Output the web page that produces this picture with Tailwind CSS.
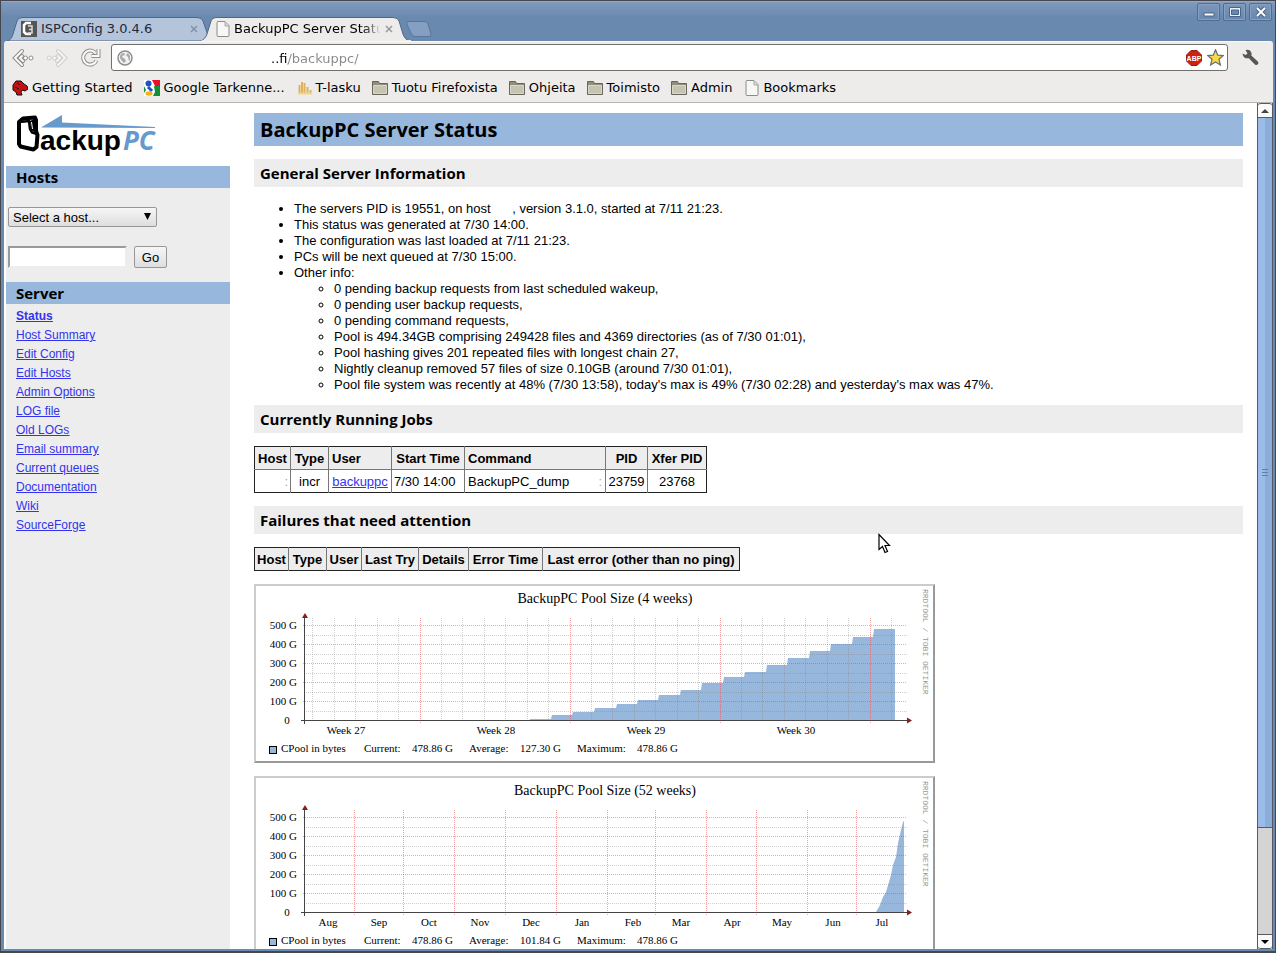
<!DOCTYPE html>
<html lang="en">
<head>
    <meta charset="utf-8"/>
    <meta content="width=device-width, initial-scale=1.0" name="viewport"/>
    <title>BackupPC Server Status</title>
    <script src="https://cdn.jsdelivr.net/npm/@tailwindcss/browser@4"></script>
</head>
<body class="h-screen overflow-hidden bg-[#6a89af] font-['Liberation_Sans',Arial,sans-serif] text-[13px] leading-4 text-black">
<div class="relative flex h-screen flex-col border border-[#45474d] border-b-2 bg-[#6a89af] pr-[2px] pb-[2px] pl-[3px]">

    <!-- Title bar and tabs -->
    <header class="-mr-[2px] -ml-[3px] flex h-10 shrink-0 items-end justify-between border-t border-[#8fa9cb] bg-linear-to-b from-[#8099bd] via-[#6a89af] via-40% to-[#6a89af] pl-[6px] font-['DejaVu_Sans',sans-serif]">
        <nav class="flex items-end">
            <div class="relative flex h-6 w-[195px] items-center pl-[14px] text-[#1c2a3c]">
                <svg class="absolute inset-0" width="204" height="24" viewBox="0 0 204 24"><path d="M0 24C4 23 5 20 6 17L10 4Q11 .5 15 .5H190Q195 .5 196 4L203 24Z" fill="#b4c4da" stroke="#4d6689"/></svg>
                <svg class="relative mr-1 shrink-0" width="16" height="16" viewBox="0 0 16 16"><path fill="#555" d="M0 0h16v16H0z"/><path d="M10 2H5L3 4v7l2 2h5" fill="none" stroke="#fff" stroke-width="2.5"/><path d="M7 5h4v7H7M8 8.500h3" fill="none" stroke="#ddd" stroke-width="1.500"/></svg>
                <a href="#" class="relative flex-1">ISPConfig 3.0.4.6</a>
                <button class="relative mr-1 size-2" aria-label="Close tab"><svg width="8" height="8" viewBox="0 0 8 8"><path d="M1 1l6 6M7 1L1 7" stroke="#8391a5" stroke-width="1.500"/></svg></button>
            </div>
            <div class="relative flex h-6 w-[204px] items-center pl-[14px]">
                <svg class="absolute inset-0" width="210" height="24" viewBox="0 0 210 24"><path d="M-2 24C2 23 4 20 5 17L9 4Q10 .5 14 .5H191Q196 .5 197 4L201 17Q203 23 208 24Z" fill="#edeceb" stroke="#4d6689"/><path d="M-3 24H209" stroke="#edeceb" stroke-width="2"/></svg>
                <svg class="relative mr-1 shrink-0" width="14" height="16" viewBox="0 0 14 16"><path d="M2 .5h7L13 4.500v10q0 1-1 1H2q-1 0-1-1v-13q0-1 1-1z" fill="#f7f8f6" stroke="#8a8c88"/><path d="M9 1v4h4" fill="#d5d9d5" stroke="#aaa"/></svg>
                <a href="#" class="relative w-[147px] overflow-hidden whitespace-nowrap [mask-image:linear-gradient(to_right,#000_88%,transparent)]">BackupPC Server Status</a>
                <button class="relative ml-1 size-2" aria-label="Close tab"><svg width="8" height="8" viewBox="0 0 8 8"><path d="M1 1l6 6M7 1L1 7" stroke="#999" stroke-width="1.500"/></svg></button>
            </div>
            <button class="mb-[3px]" aria-label="New tab"><svg width="26" height="17" viewBox="0 0 26 17"><path d="M3 .5H19Q21 .5 22 3L25 13Q25.500 15.500 23 15.500H9Q6.500 15.500 5.500 13L.8 3Q0 .5 3 .5Z" fill="#859fc2" stroke="#5a759b"/></svg></button>
        </nav>
        <div class="flex gap-[3px] self-start pt-px pr-[3px]">
            <button class="flex h-[18px] w-[23px] items-center justify-center rounded-[2px] border border-[#4f6d93] shadow-[inset_0_0_0_1px_#86a0c2]" aria-label="Minimize"><svg width="12" height="10" viewBox="0 0 12 10"><path d="M1 6h10v3H1z" fill="#fff" stroke="#4a6486"/></svg></button>
            <button class="flex h-[18px] w-[23px] items-center justify-center rounded-[2px] border border-[#4f6d93] shadow-[inset_0_0_0_1px_#86a0c2]" aria-label="Maximize"><svg width="12" height="10" viewBox="0 0 12 10"><path d="M.5.5h11v9H.5z" fill="#e8eef6" stroke="#4a6486"/><path d="M2.500 3h7v4.500h-7z" fill="#6a89af" stroke="#4a6486"/></svg></button>
            <button class="flex h-[18px] w-[23px] items-center justify-center rounded-[2px] border border-[#4f6d93] shadow-[inset_0_0_0_1px_#86a0c2]" aria-label="Close"><svg width="12" height="12" viewBox="0 0 12 12"><path d="M2 2l8 8M10 2l-8 8" stroke="#4a6486" stroke-width="4"/><path d="M2 2l8 8M10 2l-8 8" stroke="#fff" stroke-width="2"/></svg></button>
        </div>
    </header>

    <!-- Toolbar -->
    <div class="flex h-8 shrink-0 items-center rounded-t-[3px] border-t border-[#f8f8f8] bg-[#edeceb] pr-[14px] pl-2 font-['DejaVu_Sans',sans-serif]">
        <button class="mr-3" aria-label="Back"><svg width="22" height="20" viewBox="0 0 22 20"><path d="M10 3L3 10l7 7M10 8L8 10l3 3" fill="none" stroke="#8c8c8a" stroke-width="4" stroke-linecap="round"/><path d="M10 3L3 10l7 7M10 8L8 10l3 3" fill="none" stroke="#fafafa" stroke-width="2" stroke-linecap="round"/><circle cx="13.500" cy="10" r="2" fill="#fff" stroke="#8c8c8a"/><circle cx="19" cy="10" r="2" fill="#fff" stroke="#8c8c8a"/></svg></button>
        <button class="mr-3" aria-label="Forward"><svg width="22" height="20" viewBox="0 0 22 20"><path d="M12 3l7 7-7 7M12 8l2 2-3 3" fill="none" stroke="#cfcecc" stroke-width="4" stroke-linecap="round"/><path d="M12 3l7 7-7 7M12 8l2 2-3 3" fill="none" stroke="#f4f4f3" stroke-width="2" stroke-linecap="round"/><circle cx="8.500" cy="10" r="2" fill="#f4f4f3" stroke="#cfcecc"/><circle cx="3" cy="10" r="2" fill="#f4f4f3" stroke="#cfcecc"/></svg></button>
        <button class="mr-[10px]" aria-label="Reload"><svg width="21" height="21" viewBox="0 0 21 21"><path d="M16.500 13.500A7 7 0 1 1 15 5.500M18.500 2v7h-7" fill="none" stroke="#8c8c8a" stroke-width="4"/><path d="M16.500 13.500A7 7 0 1 1 15 5.500M18.500 2v7h-7" fill="none" stroke="#fafafa" stroke-width="2"/></svg></button>
        <div class="flex h-[27px] flex-1 items-center rounded-[3px] border border-[#70706c] bg-white pr-[3px] pl-[5px]">
            <svg width="16" height="16" viewBox="0 0 16 16"><circle cx="8" cy="8" r="7" fill="#f2f2f2" stroke="#8d8d8d" stroke-width="1.500"/><path d="M3 6Q4 3 7 3L8 4 7 6 6 5 5 7 8 9 9 11 7 13 5 11 3 8zM11 3l2 3 0 4-1 1-1-4-2-2z" fill="#aaa"/></svg>
            <label for="address" class="sr-only">Address</label>
            <input id="address" class="min-w-0 flex-1 bg-linear-to-r from-black from-[155px] to-[#888] to-[155px] bg-clip-text pt-[2px] pl-[138px] leading-5 text-transparent outline-none" value="..fi/backuppc/"/>
            <svg class="mr-[5px]" width="16" height="16" viewBox="0 0 16 16"><path d="M5 .5h6L15.500 5v6L11 15.500H5L.5 11V5z" fill="#d0200f" stroke="#8d2018"/><text x="8" y="11" text-anchor="middle" font-family="Liberation Sans" font-weight="700" font-size="7" fill="#fff">ABP</text></svg>
            <svg width="17" height="17" viewBox="0 0 16 16"><path d="M8 .8l2.100 5 5.200.4-4 3.500 1.300 5.300L8 12.200 3.400 15l1.300-5.300-4-3.500 5.200-.4z" fill="#f9d94a" stroke="#66707c" stroke-width="1.200"/></svg>
        </div>
        <button class="ml-[14px]" aria-label="Settings"><svg width="17" height="17" viewBox="0 0 17 17"><path d="M3.500 1Q8-.5 9.500 4q.3 1.500-.2 2.500l6.500 6q1.200 1.500 0 2.800t-2.900.2L6.800 9.200Q2.500 10 1 6.500L.5 4.500 3.500 6l2-1.500z" fill="#565656"/></svg></button>
    </div>

    <!-- Bookmarks bar -->
    <nav class="flex h-[30px] shrink-0 items-center gap-[11px] border-b border-[#b5b4b2] bg-[#edeceb] pl-2 font-['DejaVu_Sans',sans-serif]">
        <a href="#" class="flex items-center gap-1"><svg width="16" height="16" viewBox="0 0 16 16"><path d="M1 5L4 1l5 0 3 3 3 2 1 3-3 2-3-1-1 2 1 3H5l-1-3-3-2z" fill="#c80f12" stroke="#111"/><path d="M5 3l3 2M3 7l4 2" stroke="#111"/></svg>Getting Started</a>
        <a href="#" class="flex items-center gap-1"><svg width="16" height="16" viewBox="0 0 16 16"><path fill="#fff" d="M0 0h16v16H0z"/><path d="M8 0h8v6h-5z" fill="#e8112a"/><path d="M10 6h6v10H9l2-4z" fill="#128f38"/><path d="M0 6l2 4-2 3z" fill="#128f38"/><circle cx="4.500" cy="3.500" r="3" fill="#1c53c6"/><path d="M4 7l4 4" stroke="#1c53c6" stroke-width="3"/><ellipse cx="5" cy="13.500" rx="3.500" ry="2.200" fill="#f3b21b"/></svg>Google Tarkenne...</a>
        <a href="#" class="ml-[2px] flex items-center gap-1"><svg width="14" height="16" viewBox="0 0 14 16"><path d="M1.500 14V5M4 14V2M6.500 14V3M9.500 14V7M12.500 14v-4" stroke="#deb35c" stroke-width="2"/><path d="M0 13.500h14" stroke="#f1d490" stroke-width="2"/></svg>T-lasku</a>
        <a href="#" class="flex items-center gap-1"><svg width="16" height="16" viewBox="0 0 16 16"><path d="M.5 1.500h6l1 2h8v11H.5z" fill="#8f8f7b" stroke="#66665a"/><path d="M1.500 5.500h13v8h-13z" fill="#c4c4b0" stroke="#d9d9ca"/></svg>Tuotu Firefoxista</a>
        <a href="#" class="flex items-center gap-1"><svg width="16" height="16" viewBox="0 0 16 16"><path d="M.5 1.500h6l1 2h8v11H.5z" fill="#8f8f7b" stroke="#66665a"/><path d="M1.500 5.500h13v8h-13z" fill="#c4c4b0" stroke="#d9d9ca"/></svg>Ohjeita</a>
        <a href="#" class="flex items-center gap-1"><svg width="16" height="16" viewBox="0 0 16 16"><path d="M.5 1.500h6l1 2h8v11H.5z" fill="#8f8f7b" stroke="#66665a"/><path d="M1.500 5.500h13v8h-13z" fill="#c4c4b0" stroke="#d9d9ca"/></svg>Toimisto</a>
        <a href="#" class="flex items-center gap-1"><svg width="16" height="16" viewBox="0 0 16 16"><path d="M.5 1.500h6l1 2h8v11H.5z" fill="#8f8f7b" stroke="#66665a"/><path d="M1.500 5.500h13v8h-13z" fill="#c4c4b0" stroke="#d9d9ca"/></svg>Admin</a>
        <a href="#" class="ml-[2px] flex items-center gap-1"><svg width="14" height="16" viewBox="0 0 14 16"><path d="M2 .5h7L13 4.500v10q0 1-1 1H2q-1 0-1-1v-13q0-1 1-1z" fill="#f7f8f6" stroke="#8a8c88"/><path d="M9 1v4h4" fill="#d5d9d5" stroke="#aaa"/></svg>Bookmarks</a>
    </nav>

    <!-- Page -->
    <div class="flex min-h-0 flex-1 overflow-hidden bg-white pl-[2px]">
        <aside class="flex w-[224px] shrink-0 flex-col">
            <div class="h-[63px] shrink-0 pt-[11px] pl-[10px]">
                <svg width="142" height="44" viewBox="0 0 142 44">
                    <path d="M25 13.500L46 1v7.500L139 13v1z" fill="#6699cc"/>
                    <path d="M3 8L7 4.500 19 3.500 20 6V17L21.500 21 20.500 33 17.500 35.500 4.500 32.500 3 30z" fill="#fff" stroke="#000" stroke-width="4" stroke-linejoin="round"/>
                    <path d="M3 8L13 7 14 15 16 18.500 21 20" fill="none" stroke="#000" stroke-width="2.500"/>
                    <path d="M14 7L18 5V18L15 16z"/>
                    <path d="M15.500 8l1 7" stroke="#fff"/>
                    <text x="24" y="36" font-family="Liberation Sans" font-weight="700" font-size="28">ackup</text>
                    <text x="107" y="36" font-family="Open Sans" font-weight="700" font-style="italic" font-size="26" fill="#6699cc">PC</text>
                </svg>
            </div>
            <div class="flex-1 bg-[#ededed]">
                <h2 class="flex h-[22px] items-center bg-[#97b7dc] pl-[10px] font-['Open_Sans',sans-serif] text-[15px] font-bold">Hosts</h2>
                <form class="px-[2px] pt-[19px]">
                    <div class="relative w-[149px]">
                        <label for="host" class="sr-only">Host</label>
                        <select id="host" class="h-5 w-full appearance-none rounded-[2px] border border-[#979797] bg-linear-to-b from-[#f6f6f6] to-[#dedede] pt-px pl-1 leading-4">
                            <option>Select a host...</option>
                        </select>
                        <svg class="pointer-events-none absolute top-[6px] right-[6px]" width="7" height="7" viewBox="0 0 7 7"><path d="M0 0h7L3.500 7z"/></svg>
                    </div>
                    <div class="mt-[19px] flex gap-[7px]">
                        <label for="search" class="sr-only">Search host</label>
                        <input id="search" type="text" class="h-[22px] w-[119px] border-2 border-t-[#9a9a9a] border-r-[#ededed] border-b-[#ededed] border-l-[#9a9a9a] bg-white px-1"/>
                        <button type="button" class="h-[22px] w-[33px] rounded-[2px] border border-[#979797] bg-linear-to-b from-[#f6f6f6] to-[#dedede] pt-px">Go</button>
                    </div>
                </form>
                <h2 class="mt-[14px] flex h-[22px] items-center bg-[#97b7dc] pl-[10px] font-['Open_Sans',sans-serif] text-[15px] font-bold">Server</h2>
                <nav class="flex flex-col items-start pt-[3px] pl-[10px] text-[12px] leading-[19px] text-[#3333ee] underline">
                    <a href="#" class="font-bold">Status</a>
                    <a href="#">Host Summary</a>
                    <a href="#">Edit Config</a>
                    <a href="#">Edit Hosts</a>
                    <a href="#">Admin Options</a>
                    <a href="#">LOG file</a>
                    <a href="#">Old LOGs</a>
                    <a href="#">Email summary</a>
                    <a href="#">Current queues</a>
                    <a href="#">Documentation</a>
                    <a href="#">Wiki</a>
                    <a href="#">SourceForge</a>
                </nav>
            </div>
        </aside>

        <main class="mx-[14px] ml-6 flex min-w-0 flex-1 flex-col items-start gap-[13px] pt-[10px]">
            <h1 class="flex h-[33px] w-full shrink-0 items-center bg-[#97b7dc] pl-[6px] font-['Open_Sans',sans-serif] text-[20px] font-bold">BackupPC Server Status</h1>
            <h2 class="flex h-7 w-full shrink-0 items-center bg-[#ededed] pl-[6px] font-['Open_Sans',sans-serif] text-[15px] font-bold">General Server Information</h2>
            <ul class="-mb-px list-disc pt-px pl-10">
                <li>The servers PID is 19551, on host <span class="inline-block w-[18px]"></span>, version 3.1.0, started at 7/11 21:23.</li>
                <li>This status was generated at 7/30 14:00.</li>
                <li>The configuration was last loaded at 7/11 21:23.</li>
                <li>PCs will be next queued at 7/30 15:00.</li>
                <li>Other info:
                    <ul class="list-[circle] pl-10">
                        <li>0 pending backup requests from last scheduled wakeup,</li>
                        <li>0 pending user backup requests,</li>
                        <li>0 pending command requests,</li>
                        <li>Pool is 494.34GB comprising 249428 files and 4369 directories (as of 7/30 01:01),</li>
                        <li>Pool hashing gives 201 repeated files with longest chain 27,</li>
                        <li>Nightly cleanup removed 57 files of size 0.10GB (around 7/30 01:01),</li>
                        <li>Pool file system was recently at 48% (7/30 13:58), today's max is 49% (7/30 02:28) and yesterday's max was 47%.</li>
                    </ul>
                </li>
            </ul>
            <h2 class="flex h-7 w-full shrink-0 items-center bg-[#ededed] pl-[6px] font-['Open_Sans',sans-serif] text-[15px] font-bold">Currently Running Jobs</h2>
            <table class="w-[453px] shrink-0 table-fixed border-collapse border border-[#222] text-center whitespace-nowrap [&_td]:h-[23px] [&_td]:pt-[2px] [&_td+td]:border-l [&_td+td]:border-l-[#777] [&_th]:h-[23px] [&_th]:border-b [&_th]:border-b-[#777] [&_th]:pt-[2px] [&_th+th]:border-l [&_th+th]:border-l-[#777]">
                <tr class="bg-[#ededed]">
                    <th class="w-9">Host</th>
                    <th class="w-[38px]">Type</th>
                    <th class="w-[63px] pl-[3px] text-left">User</th>
                    <th class="w-[73px]">Start Time</th>
                    <th class="w-[141px] pl-[3px] text-left">Command</th>
                    <th class="w-[42px]">PID</th>
                    <th>Xfer PID</th>
                </tr>
                <tr>
                    <td class="pr-[2px] text-right text-[#9a9af0]">:</td>
                    <td>incr</td>
                    <td><a href="#" class="text-[#3333ee] underline">backuppc</a></td>
                    <td class="pl-[2px] text-left">7/30 14:00</td>
                    <td class="px-[3px]"><div class="flex justify-between"><span>BackupPC_dump</span><span class="text-[#aaa]">:</span></div></td>
                    <td>23759</td>
                    <td>23768</td>
                </tr>
            </table>
            <h2 class="flex h-7 w-full shrink-0 items-center bg-[#ededed] pl-[6px] font-['Open_Sans',sans-serif] text-[15px] font-bold">Failures that need attention</h2>
            <table class="w-[486px] shrink-0 table-fixed border-collapse border border-[#222] whitespace-nowrap [&_th]:h-[23px] [&_th]:pt-[2px] [&_th+th]:border-l [&_th+th]:border-l-[#777]">
                <tr class="bg-[#ededed]">
                    <th class="w-[34px]">Host</th>
                    <th class="w-[38px]">Type</th>
                    <th class="w-[35px]">User</th>
                    <th class="w-[57px]">Last Try</th>
                    <th class="w-[50px]">Details</th>
                    <th class="w-[74px]">Error Time</th>
                    <th>Last error (other than no ping)</th>
                </tr>
            </table>
            <div class="shrink-0 border-2 border-t-[#ccc] border-r-[#999] border-b-[#999] border-l-[#ccc]"><svg id="chart4" class="block" width="677" height="175" viewBox="0 0 677 175"></svg></div>
            <div class="shrink-0 border-2 border-t-[#ccc] border-r-[#999] border-b-[#999] border-l-[#ccc]"><svg id="chart52" class="block" width="677" height="175" viewBox="0 0 677 175"></svg></div>
        </main>

        <!-- Scrollbar -->
        <div class="flex w-4 shrink-0 flex-col border-x border-[#555a66] bg-[#d6d4d2]">
            <div class="flex h-[15px] items-center justify-center rounded-t-[3px] border-y border-[#555a66] bg-[#fafafa]"><svg width="8" height="4" viewBox="0 0 8 4"><path d="M4 0l4 4H0z" fill="#444"/></svg></div>
            <div class="flex flex-[710] flex-col items-center justify-center gap-[2px] border-b border-[#555a66] bg-linear-to-r from-[#9bbce8] from-50% to-[#8badd9] to-50%">
                <span class="h-px w-[6px] bg-[#5f7fae]"></span>
                <span class="h-px w-[6px] bg-[#5f7fae]"></span>
                <span class="h-px w-[6px] bg-[#5f7fae]"></span>
            </div>
            <div class="flex-[106]"></div>
            <div class="flex h-[15px] items-center justify-center rounded-b-[3px] border-y border-[#555a66] bg-[#fafafa]"><svg width="8" height="4" viewBox="0 0 8 4"><path d="M0 0h8L4 4z"/></svg></div>
        </div>
    </div>

    <!-- Mouse pointer -->
    <svg class="pointer-events-none absolute top-[532px] left-[877px]" width="13" height="21" viewBox="0 0 13 21"><path d="M1 1.500v15l3.500-3 2.500 6 2.500-1-2.500-6h4.500z" fill="#fff" stroke="#000" stroke-width="1.200"/></svg>
</div>

<script>
    function drawChart(id, chart) {
        const base = 134.5;
        let out = `<rect width="677" height="175" fill="#fff"/><polygon points="${chart.area}" fill="#97b7dc"/>`;
        const line = (x1, y1, x2, y2, color) => {
            out += `<path d="M${x1} ${y1}L${x2} ${y2}" stroke="${color}" stroke-dasharray="1 1"/>`;
        };
        const text = (x, y, value, size, anchor) => {
            out += `<text x="${x}" y="${y}" font-size="${size}" text-anchor="${anchor}">${value}</text>`;
        };

        chart.minor.forEach(x => line(x + 0.5, 32, x + 0.5, 136, 'rgba(120,120,120,.35)'));
        chart.major.forEach(x => line(x + 0.5, 32, x + 0.5, 138, 'rgba(235,50,60,.45)'));
        for (let i = 0; i < 5; i++) {
            line(47, 39.5 + i * 19, 651, 39.5 + i * 19, 'rgba(225,60,60,.45)');
            line(48, 49.5 + i * 19, 651, 49.5 + i * 19, 'rgba(120,120,120,.35)');
            text(41, 43 + i * 19, `${500 - i * 100} G`, 11, 'end');
        }
        text(31, 138, '0', 11, 'middle');

        // axes with arrow heads
        out += `<path d="M48.5 138V30M45 ${base}H653" stroke="#444" fill="none"/>`;
        out += '<path d="M46 32L49 27l3 5zM651 131.500v6l5-3z" fill="#802020"/>';

        text(349, 17, chart.title, 14, 'middle');
        chart.labels.forEach(([x, value]) => text(x, 148, value, 11, 'middle'));

        // legend
        out += '<rect x="13.5" y="160.5" width="7" height="7" fill="#97b7dc" stroke="#000"/>';
        text(25, 166, 'CPool in bytes', 11, 'start');
        text(108, 166, 'Current:', 11, 'start');
        text(197, 166, '478.86 G', 11, 'end');
        text(213, 166, 'Average:', 11, 'start');
        text(305, 166, chart.average, 11, 'end');
        text(321, 166, 'Maximum:', 11, 'start');
        text(422, 166, '478.86 G', 11, 'end');
        out += '<text transform="translate(667 3) rotate(90)" font-family="Liberation Mono, monospace" font-size="8" fill="#999">RRDTOOL / TOBI OETIKER</text>';

        const svg = document.getElementById(id);
        svg.setAttribute('font-family', 'Liberation Serif, serif');
        svg.innerHTML = out;
    }

    // [x, y] of each daily step
    const steps = [[274, 133], [296, 129], [317, 126], [339, 122], [361, 118], [382, 114], [403, 109], [425, 104], [446, 97], [468, 91], [489, 86], [511, 79], [532, 72], [554, 65], [575, 58], [597, 51], [618, 43]];
    let stepArea = '274,134 ';
    steps.forEach(([x, y], i) => {
        const end = i < steps.length - 1 ? steps[i + 1][0] - 1 : 639;
        stepArea += `${x},${y} ${end},${y} `;
    });
    stepArea += '639,134';

    drawChart('chart4', {
        title: 'BackupPC Pool Size (4 weeks)',
        average: '127.30 G',
        area: stepArea,
        minor: [56, 78, 99, 121, 142, 185, 206, 228, 249, 271, 292, 335, 356, 378, 399, 421, 442, 485, 506, 528, 549, 571, 592, 635],
        major: [164, 314, 464, 614],
        labels: [[90, 'Week 27'], [240, 'Week 28'], [390, 'Week 29'], [540, 'Week 30']]
    });

    drawChart('chart52', {
        title: 'BackupPC Pool Size (52 weeks)',
        average: '101.84 G',
        area: '620,134 624,127 627,119 630,114 633,104 635,97 637,87 640,79 642,65 645,52 647,44 648,43 648,134',
        minor: [],
        major: [98, 147, 198, 249, 300, 351, 399, 450, 500, 551, 600],
        labels: [[72, 'Aug'], [123, 'Sep'], [173, 'Oct'], [224, 'Nov'], [275, 'Dec'], [326, 'Jan'], [377, 'Feb'], [425, 'Mar'], [476, 'Apr'], [526, 'May'], [577, 'Jun'], [626, 'Jul']]
    });
</script>
</body>
</html>
